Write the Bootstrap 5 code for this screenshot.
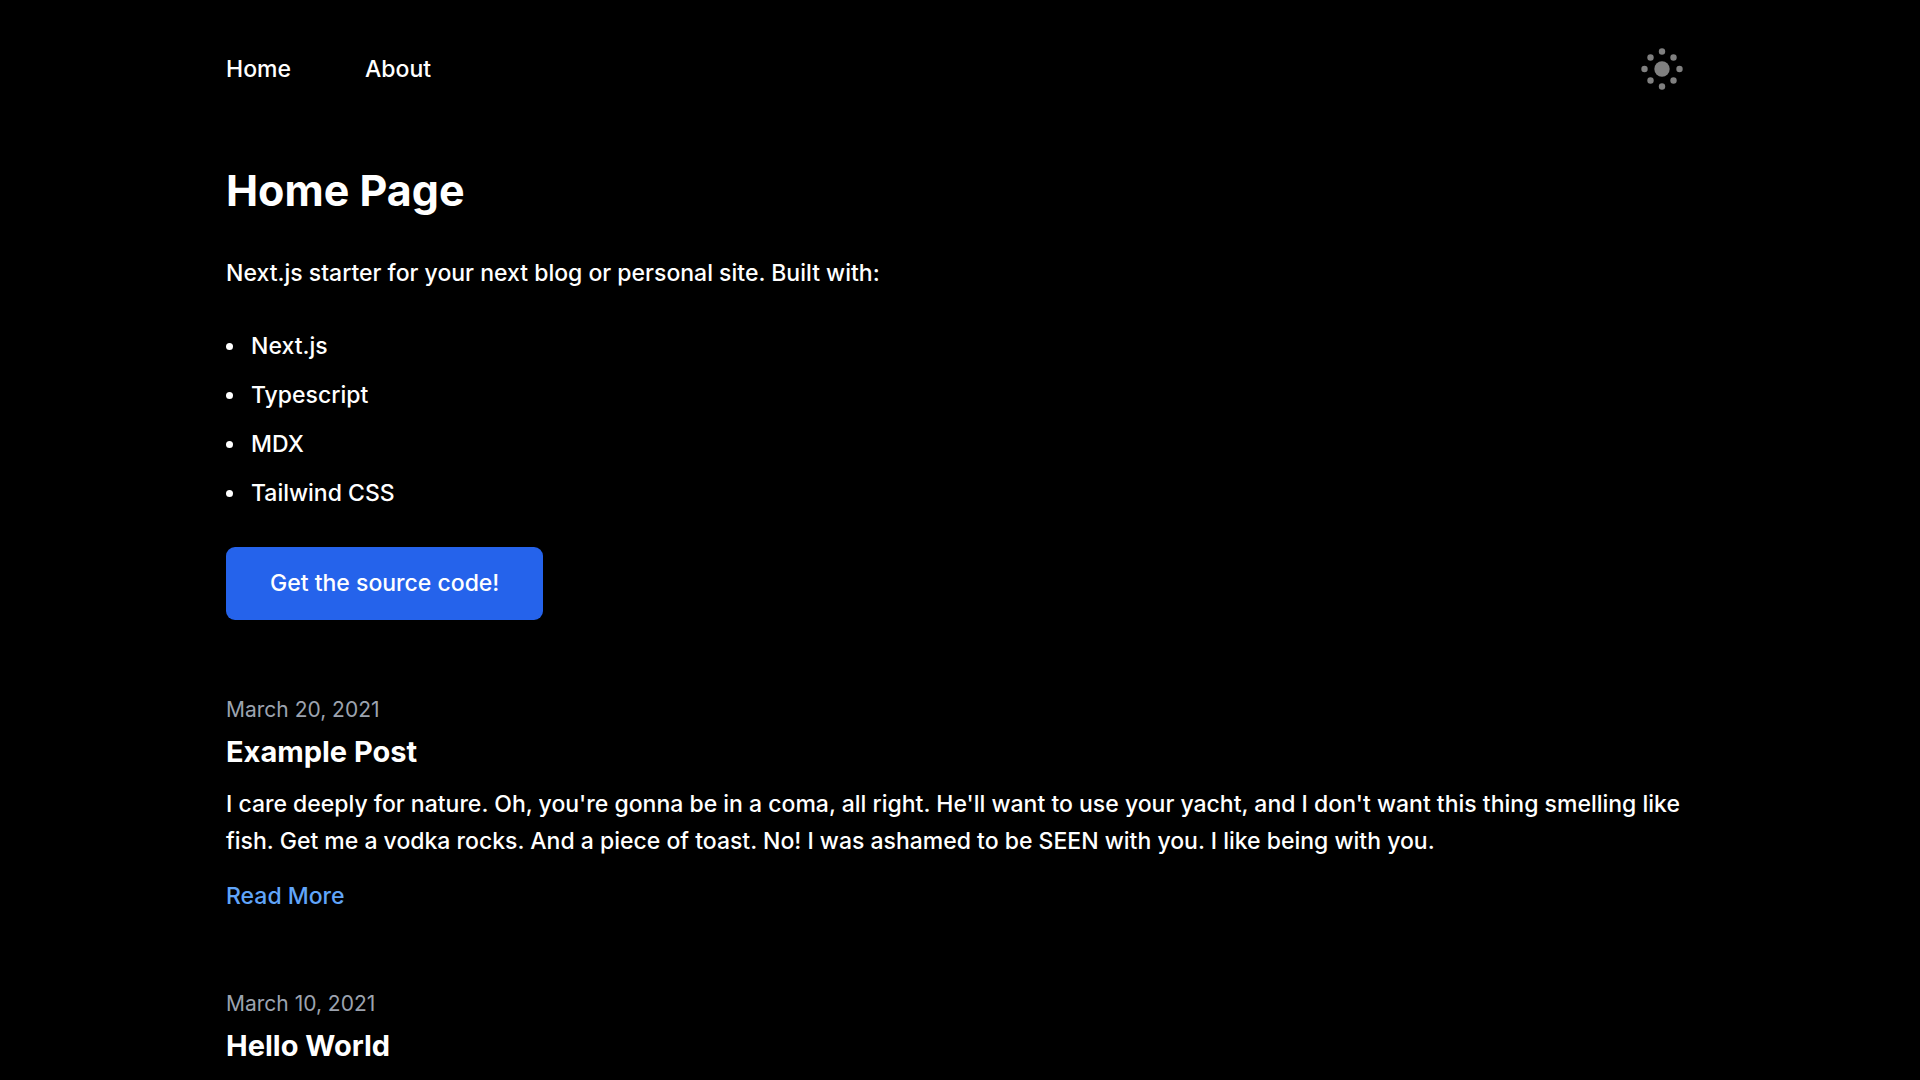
<!DOCTYPE html>
<html lang="en">
<head>
<meta charset="utf-8">
<meta name="viewport" content="width=device-width, initial-scale=1">
<title>Home Page</title>
<link href="https://cdn.jsdelivr.net/npm/bootstrap@5.3.0/dist/css/bootstrap.min.css" rel="stylesheet">
<style>
  body { background: #000; color: #fff; font-family: Inter, "Liberation Sans", sans-serif; font-size: 23px; line-height: 37px; font-weight: 500; }
  .site-wrap { max-width: 1516px; padding: 37px 24px; }
  .site-nav { gap: 74px; }
  .site-nav a, .post-title a { color: #fff; text-decoration: none; }
  .theme-toggle { width: 64px; height: 64px; color: #808080; }
  .page-title { font-size: 43px; line-height: 56px; font-weight: 700; margin: 61px 0 37px; }
  .intro { margin-bottom: 36px; }
  .stack-list { gap: 12px; margin-bottom: 35px; }
  .stack-list li { gap: 18px; }
  .stack-list li::before { content: ""; width: 7px; height: 7px; border-radius: 50%; background: currentColor; }
  .btn-source { --bs-btn-color: #fff; --bs-btn-bg: #2563eb; --bs-btn-hover-color: #fff; --bs-btn-hover-bg: #1d4ed8; font-size: 23px; font-weight: 500; line-height: 37px; padding: 18px 44px; border: 0; border-radius: 9px; }
  .post-list { margin-top: 75px; gap: 74px; }
  .post-date { font-size: 21px; line-height: 30px; font-weight: 400; color: #9ca3af; }
  .post-title { font-size: 29px; line-height: 43px; font-weight: 700; margin: 5px 0 13px; }
  .post-excerpt { margin-bottom: 18px; }
  .read-more { color: #60a5fa; text-decoration: none; }
</style>
<script src="https://cdn.jsdelivr.net/npm/bootstrap@5.3.0/dist/js/bootstrap.bundle.min.js" defer></script>
</head>
<body>
<div class="site-wrap container-fluid mx-auto">
  <header class="d-flex justify-content-between align-items-center">
    <nav class="site-nav d-flex" aria-label="Main">
      <a href="#home">Home</a>
      <a href="#about">About</a>
    </nav>
    <button type="button" class="theme-toggle btn border-0 p-0 d-flex align-items-center justify-content-center" aria-label="Toggle dark mode">
      <svg width="44" height="44" viewBox="-22 -22 44 44" fill="currentColor" aria-hidden="true">
        <circle r="7.7"/>
        <circle cx="0" cy="-17.5" r="3.2"/><circle cx="0" cy="17.5" r="3.2"/>
        <circle cx="-17.5" cy="0" r="3.2"/><circle cx="17.5" cy="0" r="3.2"/>
        <circle cx="-11.5" cy="-11.5" r="3.2"/><circle cx="11.5" cy="-11.5" r="3.2"/>
        <circle cx="-11.5" cy="11.5" r="3.2"/><circle cx="11.5" cy="11.5" r="3.2"/>
      </svg>
    </button>
  </header>
  <main>
    <h1 class="page-title">Home Page</h1>
    <p class="intro">Next.js starter for your next blog or personal site. Built with:</p>
    <ul class="stack-list list-unstyled d-flex flex-column">
      <li class="d-flex align-items-center">Next.js</li>
      <li class="d-flex align-items-center">Typescript</li>
      <li class="d-flex align-items-center">MDX</li>
      <li class="d-flex align-items-center">Tailwind CSS</li>
    </ul>
    <a class="btn btn-source" href="#source">Get the source code!</a>
    <div class="post-list d-flex flex-column">
      <article>
        <div class="post-date"><time datetime="2021-03-20">March 20, 2021</time></div>
        <h2 class="post-title"><a href="#example-post">Example Post</a></h2>
        <p class="post-excerpt">I care deeply for nature. Oh, you're gonna be in a coma, all right. He'll want to use your yacht, and I don't want this thing smelling like fish. Get me a vodka rocks. And a piece of toast. No! I was ashamed to be SEEN with you. I like being with you.</p>
        <a class="read-more" href="#example-post">Read More</a>
      </article>
      <article>
        <div class="post-date"><time datetime="2021-03-10">March 10, 2021</time></div>
        <h2 class="post-title"><a href="#hello-world">Hello World</a></h2>
      </article>
    </div>
  </main>
</div>
</body>
</html>
